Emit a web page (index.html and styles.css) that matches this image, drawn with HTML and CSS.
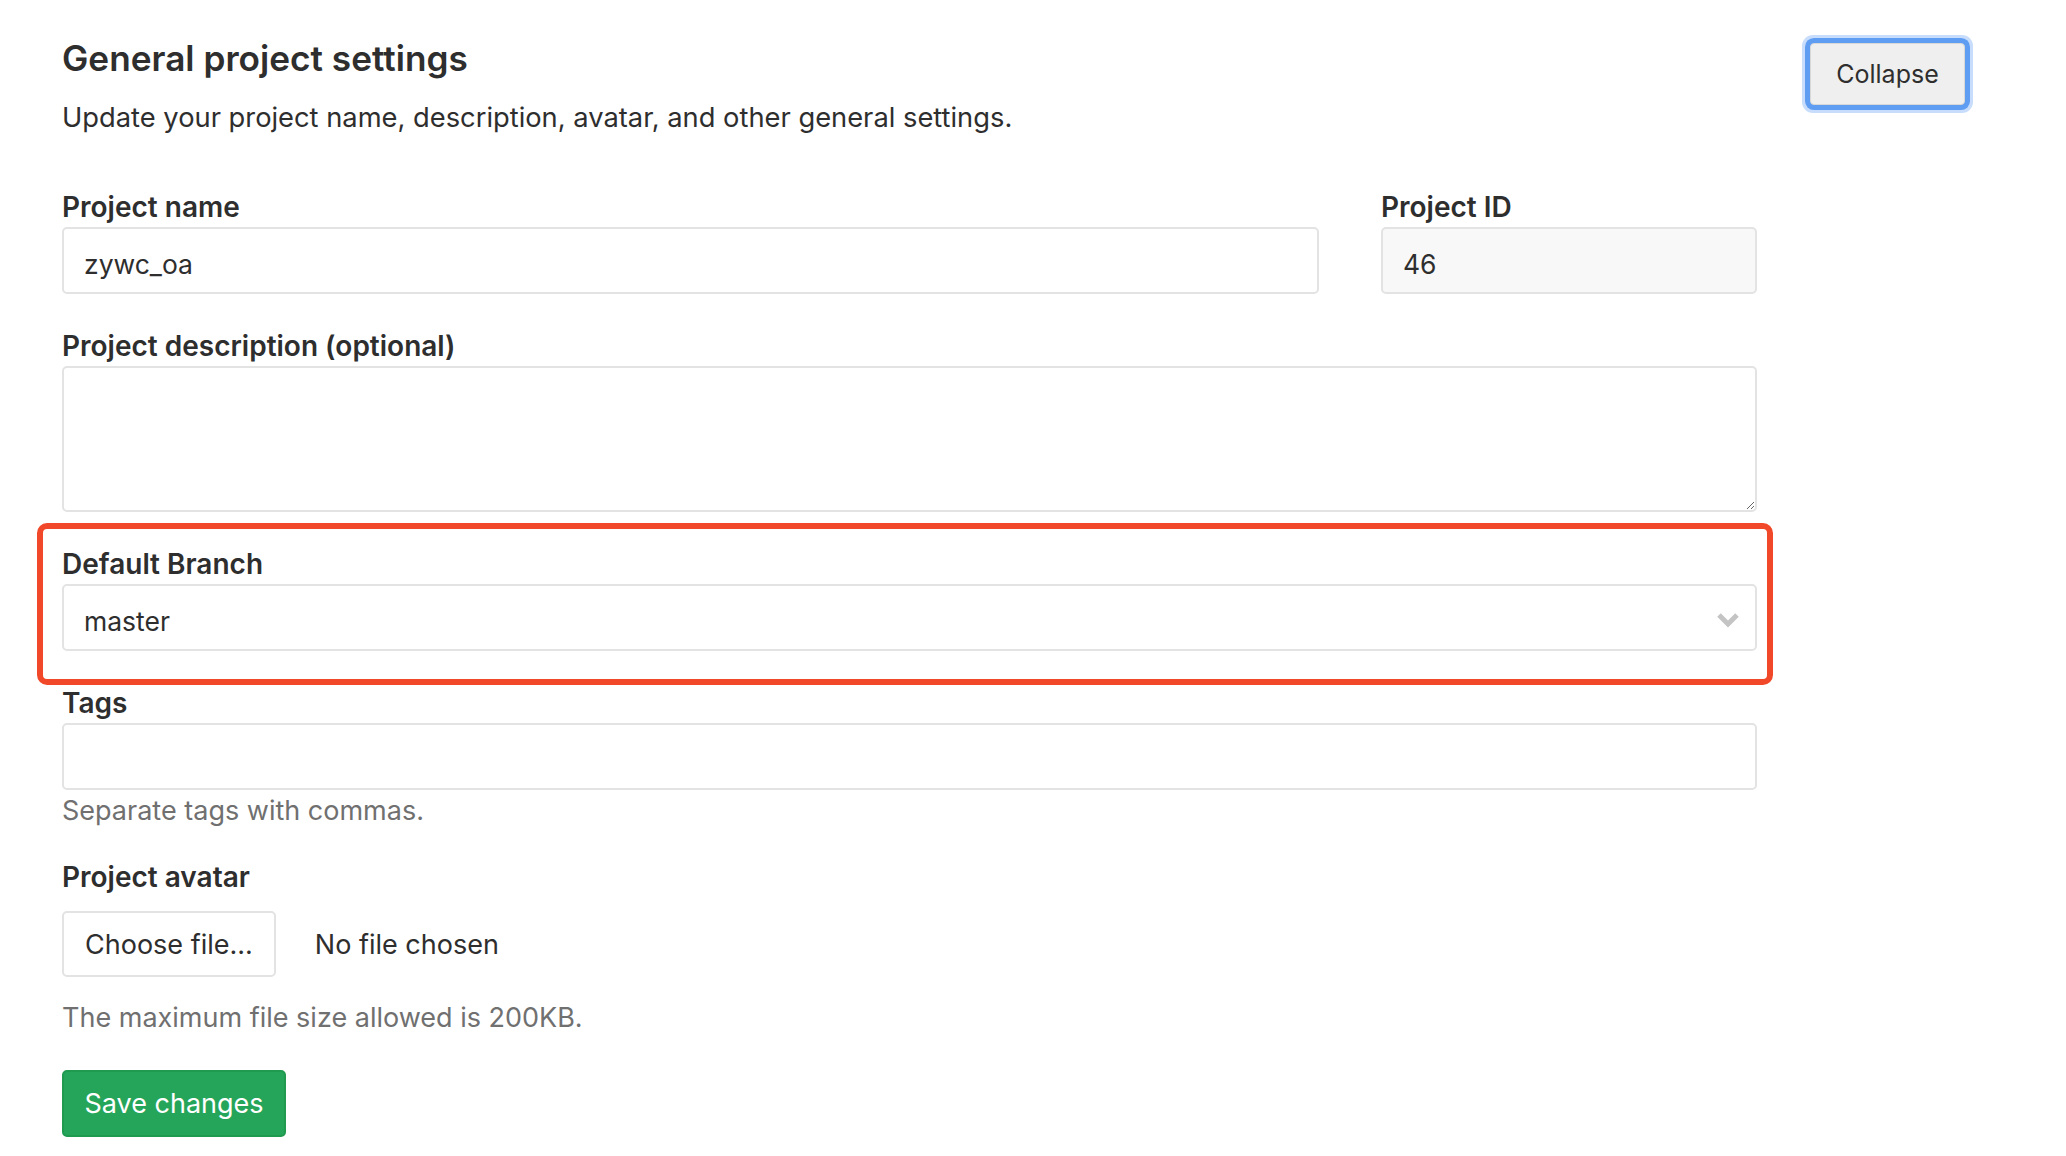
FILE: index.html
```html
<!DOCTYPE html>
<html lang="en">
<head>
    <meta charset="UTF-8">
    <meta name="viewport" content="width=device-width, initial-scale=1.0">
    <title>General project settings</title>
    <link rel="stylesheet" href="styles.css">
</head>
<body>
    <section class="settings">
        <div class="settings-header">
            <div>
                <h4 class="settings-title">General project settings</h4>
                <p class="settings-desc">Update your project name, description, avatar, and other general settings.</p>
            </div>
            <button type="button" class="btn-collapse">Collapse</button>
        </div>

        <form class="settings-form">
            <div class="row">
                <div class="form-group">
                    <label for="project-name">Project name</label>
                    <input type="text" id="project-name" class="form-control" value="zywc_oa">
                </div>
                <div class="form-group">
                    <label for="project-id">Project ID</label>
                    <input type="text" id="project-id" class="form-control" value="46" readonly>
                </div>
            </div>

            <div class="form-group">
                <label for="project-desc">Project description (optional)</label>
                <textarea id="project-desc" class="form-control"></textarea>
            </div>

            <div class="form-group highlight">
                <label for="default-branch">Default Branch</label>
                <div class="select-wrap">
                    <select id="default-branch" class="form-control">
                        <option>master</option>
                    </select>
                    <svg class="chevron" width="24" height="16" viewBox="0 0 24 16"><path d="M3 3 L12 12 L21 3" fill="none" stroke="#c4c4c4" stroke-width="5"/></svg>
                </div>
            </div>

            <div class="form-group">
                <label for="tags">Tags</label>
                <input type="text" id="tags" class="form-control">
                <p class="help">Separate tags with commas.</p>
            </div>

            <div class="form-group">
                <label>Project avatar</label>
                <div class="file-row">
                    <button type="button" class="btn">Choose file...</button>
                    <span class="file-name">No file chosen</span>
                </div>
                <p class="help help-file">The maximum file size allowed is 200KB.</p>
            </div>

            <button type="submit" class="btn btn-save">Save changes</button>
        </form>
    </section>
</body>
</html>
```

FILE: styles.css
```css
body {
    margin: 0;
    font-family: Inter, "Noto Sans", sans-serif;
    color: #2e2e2e;
    background-color: #fff;
}
.settings {
    padding: 0 101px 0 62px;
}
.settings-header {
    display: flex;
    justify-content: space-between;
    align-items: flex-start;
    padding-top: 36px;
}
.settings-title {
    margin: 0;
    font-size: 35.2px;
    line-height: 44px;
    font-weight: 600;
}
.settings-desc {
    margin: 20px 0 0;
    font-size: 27.3px;
    line-height: 36px;
}
.btn-collapse {
    margin-top: 7px;
    width: 155px;
    height: 62px;
    font-family: inherit;
    font-size: 25px;
    color: #2e2e2e;
    background-color: #efefef;
    border: 1px solid #d8d8d8;
    border-radius: 4px;
    box-shadow: 0 0 0 5px #5f9df3, 0 0 0 8px rgba(95, 157, 243, 0.35);
}
.settings-form {
    width: 1695px;
    margin-top: 55px;
}
.row {
    display: grid;
    grid-template-columns: 1257px 376px;
    column-gap: 62px;
}
.form-group {
    margin-bottom: 36px;
}
.form-group label {
    display: block;
    font-size: 28px;
    line-height: 32px;
    font-weight: 600;
    margin-bottom: 4px;
}
.form-control {
    display: block;
    box-sizing: border-box;
    width: 100%;
    height: 67px;
    padding: 6px 20px 0;
    font-family: inherit;
    font-size: 26.5px;
    color: #2e2e2e;
    background-color: #fff;
    border: 2px solid #e3e3e3;
    border-radius: 5px;
}
.form-control[readonly] {
    background-color: #f8f8f8;
}
textarea.form-control {
    height: 146px;
}
.highlight {
    position: relative;
}
.highlight::before {
    content: "";
    position: absolute;
    left: -25px;
    right: -16px;
    top: -25px;
    bottom: -34px;
    border: 6px solid #f2482a;
    border-radius: 10px;
    pointer-events: none;
}
.select-wrap {
    position: relative;
}
.select-wrap select {
    appearance: none;
    -webkit-appearance: none;
}
.chevron {
    position: absolute;
    right: 17px;
    top: 28px;
}
.help {
    margin: 3px 0 0;
    font-size: 27px;
    line-height: 36px;
    color: #707070;
}
.file-row {
    display: flex;
    align-items: center;
    gap: 39px;
    margin-top: 18px;
}
.btn {
    box-sizing: border-box;
    height: 66px;
    padding: 0 21px;
    font-family: inherit;
    font-size: 27px;
    white-space: nowrap;
    color: #2e2e2e;
    background-color: #fff;
    border: 2px solid #e3e3e3;
    border-radius: 5px;
}
.file-name {
    font-size: 27px;
}
.help-file {
    margin-top: 23px;
}
.form-group:has(.help) {
    margin-bottom: 32px;
}
.btn-save {
    width: 224px;
    height: 67px;
    padding: 0;
    margin-top: 2px;
    color: #fff;
    background-color: #25a55a;
    border-color: #1f9a4f;
}
```
